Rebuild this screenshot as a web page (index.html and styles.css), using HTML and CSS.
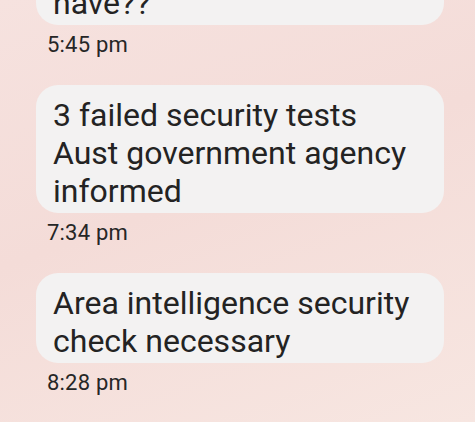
FILE: index.html
```
<!DOCTYPE html>
<html>
<head>
    <meta http-equiv="Content-Type" content="text/html; charset=utf-8">
    <title>Messages</title>
    <link rel="stylesheet" href="styles.css">
</head>
<body>
    <div class="thread">
        <div class="message first">
            <div class="bubble">have??</div>
            <div class="time">5:45 pm</div>
        </div>
        <div class="message">
            <div class="bubble">3 failed security tests<br>Aust government agency<br>informed</div>
            <div class="time">7:34 pm</div>
        </div>
        <div class="message">
            <div class="bubble">Area intelligence security<br>check necessary</div>
            <div class="time">8:28 pm</div>
        </div>
    </div>
</body>
</html>
```

FILE: styles.css
```
html, body {
    height: 100%;
}
body {
    font-family: Roboto, "Noto Sans", sans-serif;
    background: linear-gradient(160deg, #f6e2df 0%, #f4dcd8 45%, #f7e6e1 100%);
    margin: 0;
    padding: 0;
    overflow: hidden;
    color: #222;
}
.thread {
    display: flex;
    flex-direction: column;
    padding: 0 31px 0 36px;
}
.message {
    display: flex;
    flex-direction: column;
    margin-bottom: 28px;
}
.message.first {
    margin-top: -27px;
}
.bubble {
    background-color: #f3f2f2;
    border-radius: 22px;
    padding: 11px 16px 3px 17px;
    font-size: 32px;
    line-height: 38px;
    color: #232323;
}
.time {
    margin: 8px 0 0 11px;
    font-size: 22px;
    line-height: 24px;
    letter-spacing: 0.2px;
    color: #262626;
}
```
